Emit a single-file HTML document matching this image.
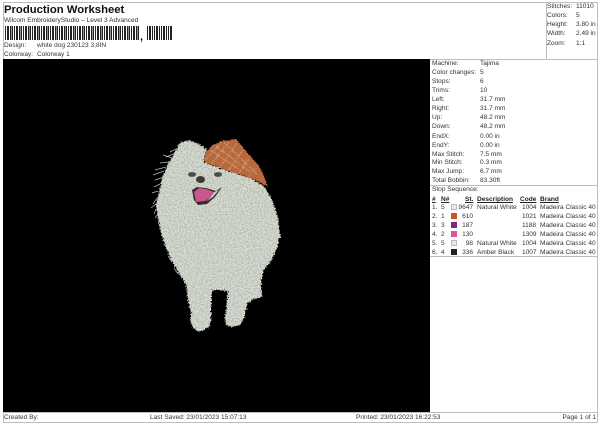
<!DOCTYPE html>
<html><head><meta charset="utf-8">
<style>
html,body{margin:0;padding:0;background:#fff;}
#p{position:relative;width:600px;height:424px;overflow:hidden;background:#fff;font-family:"Liberation Sans",sans-serif;font-size:6.55px;color:#333;}
#p div.t{position:absolute;white-space:nowrap;line-height:8px;margin-top:1px;}
.l{position:absolute;background:#bdbdbd;}
.s{position:absolute;width:6px;height:6px;}
u{text-decoration:underline;font-weight:bold;color:#222;}
</style></head><body><div id="p">
<div class="l" style="left:3px;top:2px;width:595px;height:1px"></div>
<div class="l" style="left:546px;top:2px;width:1px;height:57px"></div>
<div class="l" style="left:597px;top:2px;width:1px;height:421px"></div>
<div class="l" style="left:3px;top:2px;width:1px;height:421px"></div>
<div class="l" style="left:430px;top:59px;width:168px;height:1px"></div>
<div class="l" style="left:430px;top:185px;width:168px;height:1px"></div>
<div class="l" style="left:430px;top:256px;width:168px;height:1px"></div>
<div class="l" style="left:3px;top:412px;width:595px;height:1px"></div>
<div class="l" style="left:3px;top:422px;width:595px;height:1px"></div>

<div class="t" style="left:4px;top:3px;font-size:11.3px;line-height:13px;font-weight:bold;color:#111">Production Worksheet</div>
<div class="t" style="left:4px;top:16px;">Wilcom EmbroideryStudio – Level 3 Advanced</div>
<div style="position:absolute;left:5px;top:26px;width:134px;height:14px;background:repeating-linear-gradient(90deg,#222 0 1px,#fff 1px 2px,#222 2px 4px,#fff 4px 5px,#222 5px 6px,#fff 6px 6.7px,#222 6.7px 8px,#fff 8px 9px)"></div>
<div style="position:absolute;left:147px;top:26px;width:25px;height:14px;background:repeating-linear-gradient(90deg,#222 0 1px,#fff 1px 2px,#222 2px 4px,#fff 4px 5px,#222 5px 6px,#fff 6px 7px)"></div>
<div class="t" style="left:140px;top:30px;font-size:11px;line-height:12px;font-weight:bold;color:#111">,</div>
<div class="t" style="left:4px;top:41px;">Design:</div>
<div class="t" style="left:37px;top:41px;">white dog 230123 3,8IN</div>
<div class="t" style="left:4px;top:50px;">Colorway:</div>
<div class="t" style="left:37px;top:50px;">Colorway 1</div>

<div class="t" style="left:547px;top:2px">Stitches:</div><div class="t" style="left:576px;top:2px">11010</div>
<div class="t" style="left:547px;top:11px">Colors:</div><div class="t" style="left:576px;top:11px">5</div>
<div class="t" style="left:547px;top:20px">Height:</div><div class="t" style="left:576px;top:20px">3.80 in</div>
<div class="t" style="left:547px;top:29px">Width:</div><div class="t" style="left:576px;top:29px">2.49 in</div>
<div class="t" style="left:547px;top:39px">Zoom:</div><div class="t" style="left:576px;top:39px">1:1</div>

<svg style="position:absolute;left:3px;top:59px" width="427" height="353" viewBox="3 59 427 353">
<defs>
<filter id="tx" x="-5%" y="-5%" width="110%" height="110%">
<feTurbulence type="fractalNoise" baseFrequency="0.7" numOctaves="2" seed="4" result="n"/>
<feDisplacementMap in="SourceGraphic" in2="n" scale="5" xChannelSelector="R" yChannelSelector="G" result="sg"/>
<feColorMatrix in="n" type="matrix" values="0 0 0 0 0.45  0 0 0 0 0.48  0 0 0 0 0.43  3.6 0 0 0 -1.45" result="d"/>
<feComposite in="d" in2="sg" operator="in" result="dd"/>
<feMerge><feMergeNode in="sg"/><feMergeNode in="dd"/></feMerge>
</filter>
<filter id="ear" x="-5%" y="-5%" width="110%" height="110%">
<feTurbulence type="fractalNoise" baseFrequency="0.6" numOctaves="2" seed="9" result="n"/>
<feDisplacementMap in="SourceGraphic" in2="n" scale="3" xChannelSelector="R" yChannelSelector="G"/>
</filter>
<clipPath id="ec"><path d="M203 160L206 152L213 145L222 141L236 139L242 146L251 157L258 165L263 174L268 187L258 181L244 176L232 172L218 167L207 163Z"/></clipPath>
</defs>
<rect x="3" y="59" width="427" height="353" fill="#000"/>
<g stroke="#b8bfb4" stroke-width="0.7" fill="none">
<path d="M172 158L163 155M170 162L160 163M166 167L155 170M164 171L153 175M161 178L155 180M160 184L154 187M158 191L152 193M157 198L153 204M156 204L151 208M156 209L154 214M158 214L155 218M178 148L170 152M176 153L166 157M181 143L177 146M186 141L194 142M190 142L199 146M168 250L166 243M172 262L168 256M178 274L174 268"/>
</g>
<g filter="url(#tx)">
<path fill="#d8ddd4" d="M181 142L190 141L199 144L206 149L204 162L225 170L250 178L264 186L272 200L278 218L280 236L277 248L271 261L264 269L262 276L261 286L262 297L252 300L247 304L244 318L240 325L232 327L226 325L225 318L228 292L224 290L212 290L211 305L211 320L209 327L199 332L193 328L190 320L191 312L188 300L186 284L178 272L170 257L165 245L160 230L158 218L156 205L159 192L162 178L168 164L175 152Z"/>
</g>
<g filter="url(#ear)">
<g clip-path="url(#ec)">
<rect x="200" y="135" width="72" height="56" fill="#b9673a"/>
<path stroke="#d9c4a8" stroke-width="0.8" stroke-opacity="0.55" fill="none" d="M205 160L222 142M211 164L230 141M219 168L238 142M228 171L243 150M238 175L249 158M248 178L256 168M210 150L240 170M216 146L250 172M224 142L258 175"/>
</g>
</g>
<ellipse cx="192" cy="174.500" rx="4" ry="2.400" fill="#4a4c46"/>
<ellipse cx="218" cy="174.500" rx="4" ry="2.400" fill="#4a4c46"/>
<ellipse cx="200.500" cy="179.500" rx="4.500" ry="3.500" fill="#3a3b35"/>
<path d="M192 190L197 187L206 188L216 191L222 187L215 197L207 204L198 205L194 200Z" fill="#2e2f2a"/>
<path d="M194 192L199 188L206 189L214 192L210 198L205 201L196 202Z" fill="#c9578c"/>
<path d="M214 192L219 190L213 197L206 202L210 198Z" fill="#c8c9c0"/>
</svg>

<div class="t" style="left:432px;top:59px">Machine:</div><div class="t" style="left:480px;top:59px">Tajima</div>
<div class="t" style="left:432px;top:68px">Color changes:</div><div class="t" style="left:480px;top:68px">5</div>
<div class="t" style="left:432px;top:77px">Stops:</div><div class="t" style="left:480px;top:77px">6</div>
<div class="t" style="left:432px;top:86px">Trims:</div><div class="t" style="left:480px;top:86px">10</div>
<div class="t" style="left:432px;top:95px">Left:</div><div class="t" style="left:480px;top:95px">31.7 mm</div>
<div class="t" style="left:432px;top:104px">Right:</div><div class="t" style="left:480px;top:104px">31.7 mm</div>
<div class="t" style="left:432px;top:113px">Up:</div><div class="t" style="left:480px;top:113px">48.2 mm</div>
<div class="t" style="left:432px;top:122px">Down:</div><div class="t" style="left:480px;top:122px">48.2 mm</div>
<div class="t" style="left:432px;top:132px">EndX:</div><div class="t" style="left:480px;top:132px">0.00 in</div>
<div class="t" style="left:432px;top:141px">EndY:</div><div class="t" style="left:480px;top:141px">0.00 in</div>
<div class="t" style="left:432px;top:150px">Max Stitch:</div><div class="t" style="left:480px;top:150px">7.5 mm</div>
<div class="t" style="left:432px;top:158px">Min Stitch:</div><div class="t" style="left:480px;top:158px">0.3 mm</div>
<div class="t" style="left:432px;top:167px">Max Jump:</div><div class="t" style="left:480px;top:167px">6.7 mm</div>
<div class="t" style="left:432px;top:176px">Total Bobbin:</div><div class="t" style="left:480px;top:176px">83.30ft</div>
<div class="t" style="left:432px;top:185px">Stop Sequence:</div>

<div class="t" style="left:432px;top:195px"><u>#</u></div>
<div class="t" style="left:441px;top:195px"><u>N#</u></div>
<div class="t" style="left:465px;top:195px"><u>St.</u></div>
<div class="t" style="left:477px;top:195px"><u>Description</u></div>
<div class="t" style="left:520px;top:195px"><u>Code</u></div>
<div class="t" style="left:540px;top:195px"><u>Brand</u></div>

<div class="t" style="left:432px;top:203px">1.</div><div class="t" style="left:441px;top:203px">5</div><div class="s" style="left:451px;top:204px;background:#e6e8ea;border:1px solid #bbb;width:4px;height:4px"></div><div class="t" style="right:127px;top:203px">9647</div><div class="t" style="left:477px;top:203px">Natural White</div><div class="t" style="left:522px;top:203px">1004</div><div class="t" style="left:540px;top:203px">Madeira Classic 40</div>
<div class="t" style="left:432px;top:212px">2.</div><div class="t" style="left:441px;top:212px">1</div><div class="s" style="left:451px;top:213px;background:#c8562a"></div><div class="t" style="right:127px;top:212px">610</div><div class="t" style="left:522px;top:212px">1021</div><div class="t" style="left:540px;top:212px">Madeira Classic 40</div>
<div class="t" style="left:432px;top:221px">3.</div><div class="t" style="left:441px;top:221px">3</div><div class="s" style="left:451px;top:222px;background:#7c2a80"></div><div class="t" style="right:127px;top:221px">187</div><div class="t" style="left:522px;top:221px">1188</div><div class="t" style="left:540px;top:221px">Madeira Classic 40</div>
<div class="t" style="left:432px;top:230px">4.</div><div class="t" style="left:441px;top:230px">2</div><div class="s" style="left:451px;top:231px;background:#e0509c"></div><div class="t" style="right:127px;top:230px">130</div><div class="t" style="left:522px;top:230px">1309</div><div class="t" style="left:540px;top:230px">Madeira Classic 40</div>
<div class="t" style="left:432px;top:239px">5.</div><div class="t" style="left:441px;top:239px">5</div><div class="s" style="left:451px;top:240px;background:#e6e8ea;border:1px solid #bbb;width:4px;height:4px"></div><div class="t" style="right:127px;top:239px">98</div><div class="t" style="left:477px;top:239px">Natural White</div><div class="t" style="left:522px;top:239px">1004</div><div class="t" style="left:540px;top:239px">Madeira Classic 40</div>
<div class="t" style="left:432px;top:248px">6.</div><div class="t" style="left:441px;top:248px">4</div><div class="s" style="left:451px;top:249px;background:#222"></div><div class="t" style="right:127px;top:248px">336</div><div class="t" style="left:477px;top:248px">Amber Black</div><div class="t" style="left:522px;top:248px">1007</div><div class="t" style="left:540px;top:248px">Madeira Classic 40</div>

<div class="t" style="left:4px;top:413px">Created By:</div>
<div class="t" style="left:150px;top:413px">Last Saved: 23/01/2023 15:07:13</div>
<div class="t" style="left:356px;top:413px">Printed: 23/01/2023 16:22:53</div>
<div class="t" style="right:4px;top:413px">Page 1 of 1</div>
</div></body></html>
